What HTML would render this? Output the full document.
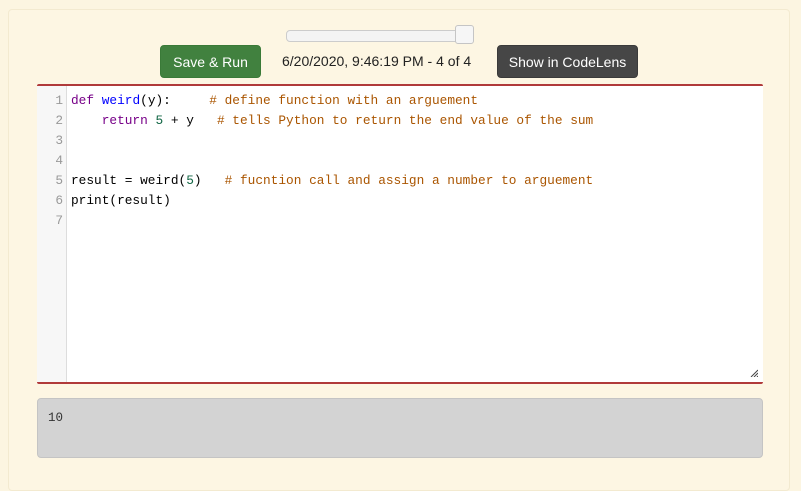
<!DOCTYPE html>
<html><head><style>
body{margin:0;width:801px;height:479px;background:#fcf5e1;position:relative;overflow:hidden;font-family:"Liberation Sans",Arial,sans-serif}
.outer{position:absolute;left:8px;top:9px;width:780px;height:480px;border:1px solid #f3ead0;border-radius:4px;background:#fdf6e3}
.track{position:absolute;left:286px;top:30px;width:186px;height:10px;border:1px solid #ccc;border-radius:4px;background:#f4f4f4}
.thumb{position:absolute;left:455px;top:25px;width:17px;height:17px;border:1px solid #c5c5c5;border-radius:3px;background:#f6f6f6}
.btn{position:absolute;top:45px;height:33px;line-height:33px;color:#fff;font-size:14px;text-align:center;border-radius:4px;box-sizing:border-box}
.ts{position:absolute;left:282px;top:53px;font-size:14px;color:#222}
.ed{position:absolute;left:37px;top:84px;width:726px;height:300px;background:#fff;border-top:2px solid #b03a3a;border-bottom:2px solid #b03a3a;box-sizing:border-box;border-radius:2px}
.gut{position:absolute;left:0;top:0;width:29px;height:100%;background:#f7f7f7;border-right:1px solid #ddd}
.code{position:absolute;left:0;top:5px;font-family:"Liberation Mono",monospace;font-size:12.8px;line-height:20px;white-space:pre}
.ln{display:inline-block;width:26px;text-align:right;color:#999;margin-right:8px}
.k{color:#708}.d{color:#00f}.n{color:#164}.c{color:#a50}
.out{position:absolute;left:37px;top:398px;width:726px;height:60px;background:#d3d3d3;border:1px solid #c4c4c4;border-radius:4px;box-sizing:border-box;font-family:"Liberation Mono",monospace;font-size:12.5px;padding:12px 10px;color:#333}
</style></head><body>
<div class="outer"></div>
<div class="track"></div><div class="thumb"></div>
<div class="btn" style="left:160px;width:101px;background:#41813f;border:1px solid #3a7a38">Save &amp; Run</div>
<div class="ts">6/20/2020, 9:46:19 PM - 4 of 4</div>
<div class="btn" style="left:497px;width:141px;background:#464646;border:1px solid #3a3a3a">Show in CodeLens</div>
<div class="ed"><div class="gut"></div>
<div class="code"><span class="ln">1</span><span class="k">def</span> <span class="d">weird</span>(y):     <span class="c"># define function with an arguement</span>
<span class="ln">2</span>    <span class="k">return</span> <span class="n">5</span> + y   <span class="c"># tells Python to return the end value of the sum</span>
<span class="ln">3</span>
<span class="ln">4</span>
<span class="ln">5</span>result = weird(<span class="n">5</span>)   <span class="c"># fucntion call and assign a number to arguement</span>
<span class="ln">6</span>print(result)
<span class="ln">7</span></div>
<svg style="position:absolute;right:5px;bottom:5px" width="8" height="8"><path d="M1 8L8 1M4 8L8 4M7 8L8 7" stroke="#444" stroke-width="1"/></svg>
</div>
<div class="out">10</div>
</body></html>
